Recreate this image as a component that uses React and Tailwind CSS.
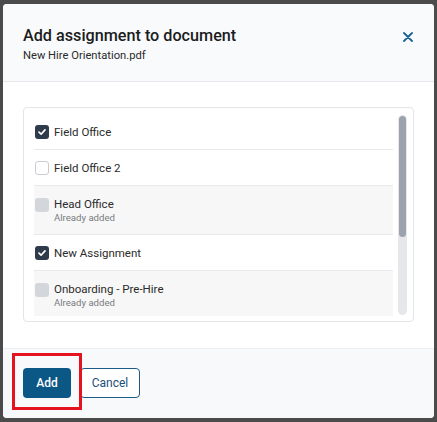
import React from "react";

function Check() {
  return (
    <svg width="10" height="10" viewBox="0 0 10 10" fill="none">
      <path d="M2 5.2 L4.1 7.2 L8 2.9" stroke="white" strokeWidth="1.7" strokeLinecap="round" strokeLinejoin="round" />
    </svg>
  );
}

function Box({ state }) {
  if (state === "checked")
    return (
      <span className="w-[14px] h-[14px] rounded-[3px] bg-[#2f3a4b] flex items-center justify-center shrink-0">
        <Check />
      </span>
    );
  if (state === "disabled")
    return <span className="w-[14px] h-[14px] rounded-[3px] bg-[#d3d6da] shrink-0" />;
  return <span className="w-[14px] h-[14px] rounded-[3px] border border-[#c9ccd1] bg-white shrink-0" />;
}

const items = [
  { label: "Field Office", state: "checked" },
  { label: "Field Office 2", state: "unchecked" },
  { label: "Head Office", state: "disabled", sub: "Already added" },
  { label: "New Assignment", state: "checked" },
  { label: "Onboarding - Pre-Hire", state: "disabled", sub: "Already added" },
];

export default function App() {
  return (
    <div
      className="w-[437px] h-[422px] bg-[#4b4b4b] pt-[4px] pl-[3px]"
      style={{ fontFamily: "Roboto, 'Liberation Sans', sans-serif" }}
    >
      <div className="w-[431px] h-[414px] bg-white rounded-[4px] overflow-hidden flex flex-col relative">
        {/* header */}
        <div className="h-[78px] shrink-0 bg-[#f8fafc] border-b border-[#e6e8eb] px-5 pt-[22px] flex justify-between items-start">
          <div>
            <div className="text-[16.2px] leading-[20px] font-medium text-[#1c1c1c]">Add assignment to document</div>
            <div className="text-[11.2px] leading-[14px] mt-[3px] text-[#2a2a2a]">New Hire Orientation.pdf</div>
          </div>
          <svg width="10" height="10" viewBox="0 0 10 10" className="mt-[6px] mr-[1px]">
            <path d="M1 1 L9 9 M9 1 L1 9" stroke="#1e6395" strokeWidth="1.8" strokeLinecap="round" />
          </svg>
        </div>
        {/* body */}
        <div className="flex-1 px-5 pt-[25px]">
          <div className="h-[215px] border border-[#e3e5e8] rounded-[4px] pl-[10px] pr-[6px] pt-[6px] flex gap-[5px]">
            <div className="flex-1 h-[202px] overflow-hidden">
              {items.map((it, i) =>
                it.sub ? (
                  <div key={i} className="bg-[#f7f7f7] border-b border-[#e8e9ec] pl-[1px] pt-[12px] pb-[9px] flex gap-[5px] items-start">
                    <Box state={it.state} />
                    <div>
                      <div className="text-[11.5px] leading-[12px] text-[#2b2b2b]">{it.label}</div>
                      <div className="text-[9.6px] leading-[14px] mt-[1px] text-[#777b80]">{it.sub}</div>
                    </div>
                  </div>
                ) : (
                  <div key={i} className="h-[36px] border-b border-[#e8e9ec] pl-[1px] flex gap-[5px] items-center">
                    <Box state={it.state} />
                    <div className="text-[11.5px] leading-[14px] text-[#2b2b2b]">{it.label}</div>
                  </div>
                )
              )}
            </div>
            <div className="w-[9px] mt-[1px] h-[200px] bg-[#e5e7eb] rounded-full p-[1px]">
              <div className="h-[121px] bg-[#9ca3af] rounded-full" />
            </div>
          </div>
        </div>
        {/* footer */}
        <div className="h-[70px] shrink-0 bg-[#f8f9fb] border-t border-[#eceef1] px-5 pt-[19px] flex gap-[9px] items-start">
          <button className="w-[48px] h-[30px] rounded-[4px] bg-[#0b5786] text-white text-[12px] font-medium">Add</button>
          <button className="w-[60px] h-[30px] rounded-[4px] bg-white border-[1.5px] border-[#1b5b87] text-[#1b4f77] text-[12px]">Cancel</button>
        </div>
        <div className="absolute left-[9px] top-[349px] w-[70px] h-[57px] border-[3px] border-[#e5121f]" />
      </div>
    </div>
  );
}
